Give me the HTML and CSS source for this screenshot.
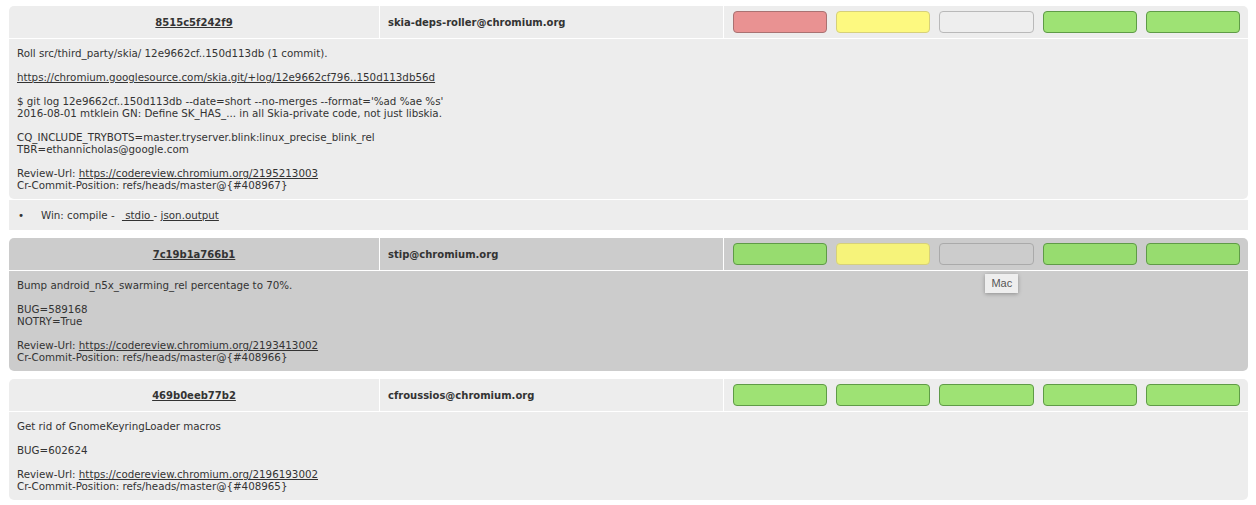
FILE: index.html
```html
<!DOCTYPE html>
<html>
<head>
<meta charset="utf-8">
<link rel="stylesheet" href="styles.css">
</head>
<body>
<div class="commit">
  <div class="head">
    <div class="cell hash"><a href="#">8515c5f242f9</a></div>
    <div class="cell author">skia-deps-roller@chromium.org</div>
    <div class="cell bots">
      <span class="bot fail"></span>
      <span class="bot warn"></span>
      <span class="bot none"></span>
      <span class="bot ok"></span>
      <span class="bot ok"></span>
    </div>
  </div>
  <div class="desc">Roll src/third_party/skia/ 12e9662cf..150d113db (1 commit).

<a href="#">https://chromium.googlesource.com/skia.git/+log/12e9662cf796..150d113db56d</a>

$ git log 12e9662cf..150d113db --date=short --no-merges --format='%ad %ae %s'
2016-08-01 mtklein GN: Define SK_HAS_... in all Skia-private code, not just libskia.

CQ_INCLUDE_TRYBOTS=master.tryserver.blink:linux_precise_blink_rel
TBR=ethannicholas@google.com

Review-Url: <a href="#">https://codereview.chromium.org/2195213003</a>
Cr-Commit-Position: refs/heads/master@{#408967}</div>
  <div class="steps">
    <ul>
      <li>Win: compile - <a class="stdio" href="#">&nbsp;stdio&nbsp;</a>- <a href="#">json.output</a></li>
    </ul>
  </div>
</div>

<div class="commit selected">
  <div class="head">
    <div class="cell hash"><a href="#">7c19b1a766b1</a></div>
    <div class="cell author">stip@chromium.org</div>
    <div class="cell bots">
      <span class="bot ok"></span>
      <span class="bot warn"></span>
      <span class="bot none tip-anchor"><span class="tooltip">Mac</span></span>
      <span class="bot ok"></span>
      <span class="bot ok"></span>
    </div>
  </div>
  <div class="desc">Bump android_n5x_swarming_rel percentage to 70%.

BUG=589168
NOTRY=True

Review-Url: <a href="#">https://codereview.chromium.org/2193413002</a>
Cr-Commit-Position: refs/heads/master@{#408966}</div>
</div>

<div class="commit">
  <div class="head">
    <div class="cell hash"><a href="#">469b0eeb77b2</a></div>
    <div class="cell author">cfroussios@chromium.org</div>
    <div class="cell bots">
      <span class="bot ok"></span>
      <span class="bot ok"></span>
      <span class="bot ok"></span>
      <span class="bot ok"></span>
      <span class="bot ok"></span>
    </div>
  </div>
  <div class="desc">Get rid of GnomeKeyringLoader macros

BUG=602624

Review-Url: <a href="#">https://codereview.chromium.org/2196193002</a>
Cr-Commit-Position: refs/heads/master@{#408965}</div>
</div>
</body>
</html>
```
FILE: styles.css
```css
html, body {
  margin: 0;
  padding: 0;
  background: #fff;
}
body {
  padding: 6px 8px 0 9px;
  font-family: "DejaVu Sans", Verdana, sans-serif;
  font-size: 10px;
  color: #333;
}
a {
  color: #333;
}
.commit {
  display: flex;
  flex-direction: column;
  gap: 1px;
  margin-bottom: 8px;
  --bg: #ededed;
}
.commit.selected {
  --bg: #cccccc;
}
.head {
  display: grid;
  grid-template-columns: 370px 343px 1fr;
  gap: 1px;
  height: 32px;
}
.cell {
  background: var(--bg);
  display: flex;
  align-items: center;
  font-weight: bold;
}
.hash {
  justify-content: center;
  border-top-left-radius: 5px;
}
.author {
  padding-left: 8px;
}
.bots {
  border-top-right-radius: 5px;
  display: grid;
  grid-template-columns: repeat(5, 1fr);
  gap: 9px;
  padding: 0 8px 0 9px;
}
.bot {
  height: 20px;
  border: 1px solid;
  border-radius: 4px;
  position: relative;
}
.bot.fail { background: #e99292; border-color: #a97272; }
.bot.warn { background: #fdf980; border-color: #d6d07a; }
.bot.none { background: #eeeeee; border-color: #b9b9b9; }
.bot.ok { background: #9ee274; border-color: #5f9b47; }
.selected .bot.none { background: #cccccc; border-color: #aaaaaa; }
.selected .bot.warn { background: #f6f37a; }
.selected .bot.ok { background: #97dc6f; }
.tooltip {
  position: absolute;
  left: 45px;
  top: 30px;
  background: #eeeeee;
  color: #555;
  font-family: "Liberation Sans", Arial, sans-serif;
  font-weight: normal;
  font-size: 11px;
  line-height: 19px;
  padding: 0 6px;
  box-shadow: 0 1px 4px rgba(0,0,0,0.3);
  white-space: nowrap;
}
.desc {
  background: var(--bg);
  white-space: pre-wrap;
  font-size: 10.3px;
  line-height: 12px;
  padding: 8px;
  border-radius: 0 0 5px 5px;
}
.steps {
  background: var(--bg);
  height: 30px;
  display: flex;
  align-items: center;
  font-size: 10.3px;
}
.steps ul {
  margin: 0;
  padding-left: 9px;
  list-style: none;
}
.steps li::before {
  content: "\2022";
  display: inline-block;
  width: 23px;
}
.stdio {
  margin-left: 4px;
}
```
